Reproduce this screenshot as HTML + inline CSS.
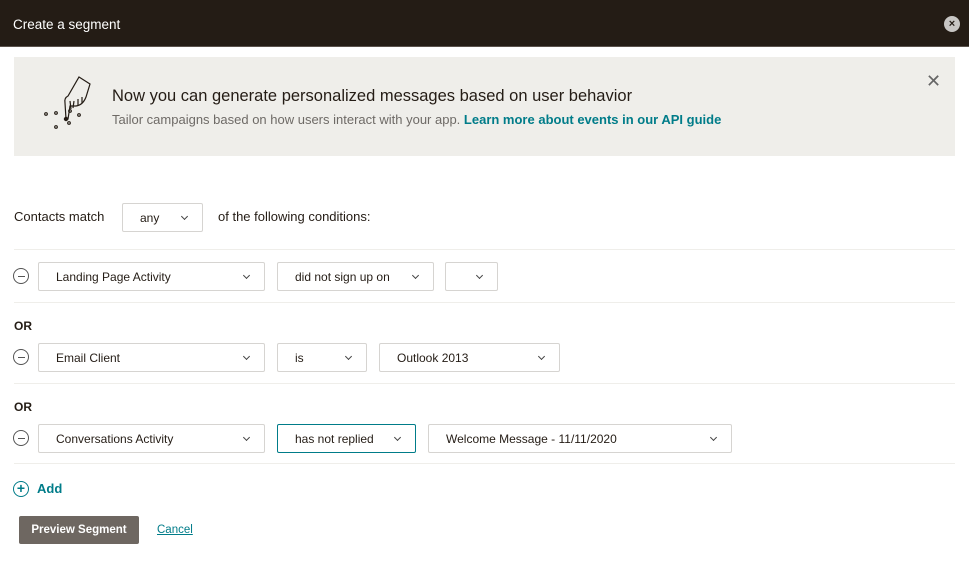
<!DOCTYPE html>
<html><head><style>
*{box-sizing:border-box;margin:0;padding:0}
body{width:969px;height:563px;background:#fff;font-family:"Liberation Sans",sans-serif;color:#241c15;position:relative;overflow:hidden}
.hdr{position:absolute;left:0;top:0;width:969px;height:47px;background:#241c15;border-bottom:1px solid #5a524c}
.hdr span{position:absolute;left:13px;top:17px;color:#fff;font-size:13.5px}
.hclose{position:absolute;left:944px;top:16px;width:16px;height:16px;border-radius:50%;background:#c8c6c4;color:#241c15;font-size:11px;line-height:16px;text-align:center;font-weight:bold}
.ban{position:absolute;left:14px;top:57px;width:941px;height:99px;background:#efeeea}
.ban h2{position:absolute;left:98px;top:30px;font-size:16.5px;font-weight:normal;color:#241c15}
.ban p{position:absolute;left:98px;top:55px;font-size:13px;color:#6e6a66}
.ban p b{color:#007c89}
.bx{position:absolute;left:912px;top:14px;font-size:18px;color:#666}
.sel{position:absolute;height:29px;border:1px solid #d6d4d1;border-radius:2px;font-size:12px;line-height:28px;padding-left:17px;color:#241c15}
.sel:after{content:"";position:absolute;right:15px;top:10px;width:4px;height:4px;border-right:1px solid #444;border-bottom:1px solid #444;transform:rotate(45deg)}
.line{position:absolute;left:14px;width:941px;height:1px;background:#efeeea}
.minus{position:absolute;left:13px;width:16px;height:16px;border:1.2px solid #555;border-radius:50%}
.minus:after{content:"";position:absolute;left:3.5px;top:6.5px;width:7px;height:1.2px;background:#555}
.or{position:absolute;left:14px;font-size:12px;font-weight:bold}
.txt{position:absolute;font-size:13px}
</style></head><body>
<div class="hdr"><span>Create a segment</span><div class="hclose">×</div></div>
<div class="ban">
<svg style="position:absolute;left:28px;top:18px" width="52" height="62" viewBox="0 0 52 62" fill="none" stroke="#241c15" stroke-width="1.2">
<path d="M37 2 L48 9 L44 22 Q41 30 34 31 L28 31 L26 44 L24 44 L23 28 Q22 23 26 21 Z"/>
<path d="M28 26 L29 34 M32 26 L31 33 M36 24 L36 30 M40 22 L40 28"/>
<circle cx="4" cy="39" r="1.3"/><circle cx="24" cy="44" r="1.6" fill="#241c15"/><circle cx="28" cy="36" r="1.3"/><circle cx="37" cy="40" r="1.3"/><circle cx="27" cy="48" r="1.3"/><circle cx="14" cy="38" r="1.3"/><circle cx="14" cy="52" r="1.3"/>
</svg>
<h2>Now you can generate personalized messages based on user behavior</h2>
<p>Tailor campaigns based on how users interact with your app. <b>Learn more about events in our API guide</b></p>
<div class="bx">✕</div>
</div>
<div class="txt" style="left:14px;top:209px">Contacts match</div>
<div class="sel" style="left:122px;top:203px;width:81px">any</div>
<div class="txt" style="left:218px;top:209px">of the following conditions:</div>
<div class="line" style="top:249px"></div>
<div class="minus" style="top:268px"></div>
<div class="sel" style="left:38px;top:262px;width:227px">Landing Page Activity</div>
<div class="sel" style="left:277px;top:262px;width:157px">did not sign up on</div>
<div class="sel" style="left:445px;top:262px;width:53px"></div>
<div class="line" style="top:302px"></div>
<div class="or" style="top:319px">OR</div>
<div class="minus" style="top:349px"></div>
<div class="sel" style="left:38px;top:343px;width:227px">Email Client</div>
<div class="sel" style="left:277px;top:343px;width:90px">is</div>
<div class="sel" style="left:379px;top:343px;width:181px">Outlook 2013</div>
<div class="line" style="top:383px"></div>
<div class="or" style="top:400px">OR</div>
<div class="minus" style="top:430px"></div>
<div class="sel" style="left:38px;top:424px;width:227px">Conversations Activity</div>
<div class="sel" style="left:277px;top:424px;width:139px;border:1.5px solid #007c89">has not replied</div>
<div class="sel" style="left:428px;top:424px;width:304px">Welcome Message - 11/11/2020</div>
<div class="line" style="top:463px"></div>
<div style="position:absolute;left:13px;top:481px;width:16px;height:16px;border:1.5px solid #007c89;border-radius:50%;color:#007c89;font-size:14px;line-height:12px;text-align:center;font-weight:bold">+</div>
<div style="position:absolute;left:37px;top:481px;color:#007c89;font-size:13px;font-weight:bold">Add</div>
<div style="position:absolute;left:19px;top:516px;width:120px;height:28px;background:#6e6761;border-radius:2px;color:#fff;font-size:11.5px;font-weight:bold;line-height:29px;text-align:center">Preview Segment</div>
<div style="position:absolute;left:157px;top:524px;color:#007c89;font-size:11.5px;text-decoration:underline">Cancel</div>
</body></html>
